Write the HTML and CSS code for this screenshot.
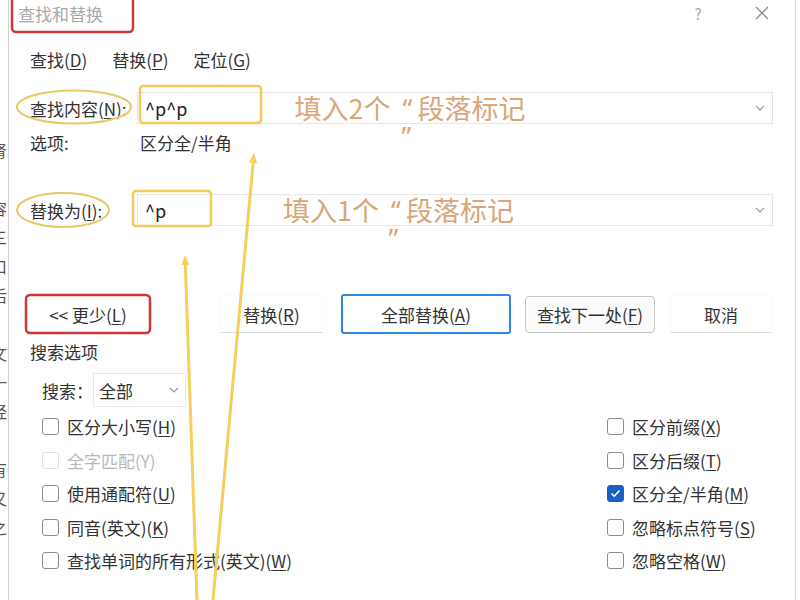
FILE: index.html
```html
<!DOCTYPE html>
<html>
<head>
    <meta charset="utf-8">
    <link rel="stylesheet" href="styles.css">
</head>
<body>
<div class="screen">
    <!-- edge of the document behind the dialog -->
    <div class="doc-edge">
        <div>肾</div><div></div><div>容</div><div>三</div><div>口</div><div>后</div><div></div>
        <div>文</div><div>一</div><div>经</div><div></div><div>有</div><div>又</div><div>之</div>
    </div>

    <div class="dialog">
        <header class="titlebar">
            <span class="title">查找和替换</span>
            <div class="window-controls">
                <span class="help">?</span>
                <svg class="close" width="14" height="14" viewBox="0 0 14 14">
                    <path d="M1 1L13 13M13 1L1 13" stroke="#8c8c8c" stroke-width="1.3" fill="none"/>
                </svg>
            </div>
        </header>

        <nav class="tabs">
            <span>查找(<u>D</u>)</span>
            <span>替换(<u>P</u>)</span>
            <span>定位(<u>G</u>)</span>
        </nav>

        <div class="field-row">
            <label class="field-label">查找内容(<u>N</u>):</label>
            <div class="combo">
                <span class="combo-value">^p^p</span>
                <svg class="chevron" width="10" height="6" viewBox="0 0 10 6"><path d="M1 1L5 5L9 1" stroke="#9a9a9a" stroke-width="1.2" fill="none"/></svg>
            </div>
        </div>

        <div class="options-row">
            <span class="options-label">选项:</span>
            <span>区分全/半角</span>
        </div>

        <div class="field-row replace-row">
            <label class="field-label">替换为(<u>I</u>):</label>
            <div class="combo">
                <span class="combo-value">^p</span>
                <svg class="chevron" width="10" height="6" viewBox="0 0 10 6"><path d="M1 1L5 5L9 1" stroke="#9a9a9a" stroke-width="1.2" fill="none"/></svg>
            </div>
        </div>

        <div class="buttons">
            <button class="button more">&lt;&lt; 更少(<u>L</u>)</button>
            <button class="button flat replace-btn">替换(<u>R</u>)</button>
            <button class="button default">全部替换(<u>A</u>)</button>
            <button class="button secondary">查找下一处(<u>F</u>)</button>
            <button class="button flat cancel">取消</button>
        </div>

        <div class="section-title">搜索选项</div>

        <div class="search-row">
            <span>搜索：</span>
            <div class="select">
                <span>全部</span>
                <svg class="chevron" width="10" height="6" viewBox="0 0 10 6"><path d="M1 1L5 5L9 1" stroke="#9a9a9a" stroke-width="1.2" fill="none"/></svg>
            </div>
        </div>

        <div class="checks">
            <div class="check-col left">
                <div class="check"><span class="box"></span>区分大小写(<u>H</u>)</div>
                <div class="check disabled"><span class="box"></span>全字匹配(Y)</div>
                <div class="check"><span class="box"></span>使用通配符(<u>U</u>)</div>
                <div class="check"><span class="box"></span>同音(英文)(<u>K</u>)</div>
                <div class="check"><span class="box"></span>查找单词的所有形式(英文)(<u>W</u>)</div>
            </div>
            <div class="check-col">
                <div class="check"><span class="box"></span>区分前缀(<u>X</u>)</div>
                <div class="check"><span class="box"></span>区分后缀(<u>T</u>)</div>
                <div class="check">
                    <span class="box checked">
                        <svg width="11" height="9" viewBox="0 0 11 9"><path d="M1.5 4.5L4.2 7.2L9.5 1.5" stroke="#fff" stroke-width="1.6" fill="none"/></svg>
                    </span>区分全/半角(<u>M</u>)
                </div>
                <div class="check"><span class="box"></span>忽略标点符号(<u>S</u>)</div>
                <div class="check"><span class="box"></span>忽略空格(<u>W</u>)</div>
            </div>
        </div>
    </div>

    <!-- hand-drawn annotations on top of the screenshot -->
    <svg class="marks" width="800" height="600" viewBox="0 0 800 600">
        <rect x="12" y="-10" width="121" height="42" rx="4" fill="none" stroke="#c9393b" stroke-width="2.5"/>
        <rect x="26" y="295" width="124" height="38" rx="4" fill="none" stroke="#c9393b" stroke-width="2.5"/>
        <ellipse cx="74" cy="107" rx="57" ry="16.5" fill="none" stroke="#e9c865" stroke-width="2"/>
        <ellipse cx="63" cy="210" rx="46" ry="17" fill="none" stroke="#e9c865" stroke-width="2"/>
        <rect x="140" y="86" width="121" height="37" rx="3" fill="none" stroke="#f1cb5a" stroke-width="2.5"/>
        <rect x="133" y="191" width="78" height="35" rx="3" fill="none" stroke="#f1cb5a" stroke-width="2.5"/>
        <line x1="213" y1="600" x2="253.1" y2="163" stroke="#f3cf5e" stroke-width="3"/>
        <polygon points="254,153 257.1,163.4 249.1,162.6" fill="#f3cf5e"/>
        <line x1="197" y1="600" x2="185.35" y2="265" stroke="#f3cf5e" stroke-width="3"/>
        <polygon points="185,255 189.35,264.9 181.35,265.1" fill="#f3cf5e"/>
    </svg>
    <div class="note note-find">填入2个<span class="quote">“</span>段落标记<br><span class="quote close-quote">”</span></div>
    <div class="note note-replace">填入1个<span class="quote">“</span>段落标记<br><span class="quote close-quote">”</span></div>
</div>
</body>
</html>
```

FILE: styles.css
```css
body {
    margin: 0;
    padding: 0;
    font-family: "Noto Sans CJK SC", "Noto Sans", sans-serif;
    background-color: white;
    color: #333;
    font-size: 17px;
}

.screen {
    position: relative;
    width: 800px;
    height: 600px;
    display: flex;
    overflow: hidden;
}

u {
    text-underline-offset: 2px;
}

/* document behind */
.doc-edge {
    width: 8px;
    flex-shrink: 0;
    overflow: hidden;
    padding-top: 136px;
    box-sizing: border-box;
    font-size: 16px;
    line-height: 29px;
    color: #555;
}

.doc-edge div {
    height: 29px;
    margin-left: -9px;
}

/* dialog */
.dialog {
    width: 788px;
    flex-shrink: 0;
    box-sizing: border-box;
    border-left: 1px solid #cfcfcf;
    border-right: 1px solid #dcdcdc;
    padding: 0 22px 0 21px;
}

.titlebar {
    height: 26px;
    margin-left: -12px;
    display: flex;
    justify-content: space-between;
    align-items: center;
}

.title {
    color: #a8a8a8;
    font-size: 17px;
}

.window-controls {
    display: flex;
    align-items: center;
    gap: 42px;
}

.help {
    width: 22px;
    text-align: center;
    color: #a8a8a8;
    font-size: 15px;
}

.close {
    margin: 0 4px;
}

.tabs {
    display: flex;
    gap: 25px;
    margin-top: 22px;
    line-height: 24px;
}

.field-row {
    display: flex;
    align-items: center;
    margin-top: 20px;
    height: 32px;
}

.replace-row {
    margin-top: 39px;
}

.field-label {
    width: 107px;
    flex-shrink: 0;
}

.combo {
    flex: 1;
    height: 32px;
    box-sizing: border-box;
    border: 1px solid #e6e6e6;
    display: flex;
    align-items: center;
    justify-content: space-between;
    padding: 0 7px 0 7px;
}

.combo-value {
    font-size: 18px;
    color: #222;
}

.options-row {
    display: flex;
    margin-top: 7px;
    line-height: 24px;
}

.options-label {
    width: 110px;
}

/* buttons */
.buttons {
    display: flex;
    align-items: center;
    height: 40px;
    margin-top: 68px;
    margin-left: -4px;
}

.button {
    font: inherit;
    color: #333;
    height: 38px;
    box-sizing: border-box;
    background-color: white;
    border: 1px solid #d6d6d6;
    border-radius: 4px;
    padding: 0;
}

.more {
    width: 124px;
    margin-right: 70px;
}

.flat {
    width: 103px;
    border-color: #fafafa #fafafa #dcdcdc;
    border-radius: 0;
}

.default {
    width: 170px;
    height: 40px;
    margin-left: 18px;
    border: 2px solid #2f87de;
    border-radius: 3px;
}

.secondary {
    width: 130px;
    height: 37px;
    margin-left: 14px;
    border-color: #c4c4c4;
    background-color: #fbfbfb;
}

.cancel {
    width: 102px;
    margin-left: 15px;
}

.section-title {
    margin-top: 6px;
    line-height: 24px;
}

.search-row {
    display: flex;
    align-items: center;
    margin-top: 9px;
    padding-left: 12px;
}

.select {
    width: 93px;
    height: 34px;
    box-sizing: border-box;
    border: 1px solid #e8e8e8;
    display: flex;
    align-items: center;
    justify-content: space-between;
    padding: 0 6px 0 5px;
}

/* checkboxes */
.checks {
    display: flex;
    margin-top: 3px;
    padding-left: 12px;
}

.check-col.left {
    width: 565px;
}

.check {
    height: 33.5px;
    display: flex;
    align-items: center;
}

.box {
    width: 17px;
    height: 17px;
    box-sizing: border-box;
    border: 1.5px solid #8c8c8c;
    border-radius: 3px;
    margin-right: 8px;
    display: flex;
    align-items: center;
    justify-content: center;
}

.box.checked {
    background-color: #1b5fc5;
    border-color: #1b5fc5;
}

.check.disabled {
    color: #b8b8b8;
}

.check.disabled .box {
    border-color: #e2e2e2;
}

/* annotations */
.marks {
    position: absolute;
    left: 0;
    top: 0;
    pointer-events: none;
}

.note {
    position: absolute;
    font-size: 27px;
    line-height: 27px;
    color: #d9a677;
    text-align: center;
    white-space: nowrap;
}

.quote {
    display: inline-block;
    width: 27px;
    font-family: "Noto Sans", sans-serif;
    text-align: left;
    padding-left: 12px;
    box-sizing: border-box;
}

.close-quote {
    padding-left: 5px;
}

.note-find {
    left: 292px;
    top: 94px;
    width: 236px;
}

.note-replace {
    left: 283px;
    top: 196px;
    width: 228px;
}
```
